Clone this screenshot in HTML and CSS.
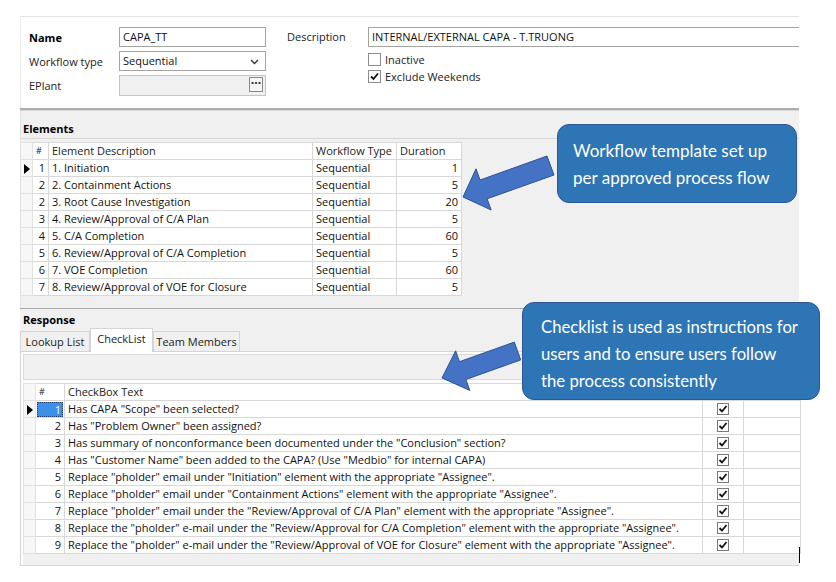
FILE: index.html
```html
<!DOCTYPE html>
<html>
<head>
<meta charset="utf-8">
<link rel="stylesheet" href="styles.css">
</head>
<body>
<div class="app">
  <section class="top">
    <div class="col1">
      <label class="lbl bold">Name</label>
      <div class="field">CAPA_TT</div>
      <label class="lbl">Workflow type</label>
      <div class="field select">Sequential
        <svg class="chev" width="9" height="6" viewBox="0 0 9 6"><path d="M1 1 L4.5 4.5 L8 1" fill="none" stroke="#333" stroke-width="1.4"/></svg>
      </div>
      <label class="lbl">EPlant</label>
      <div class="field disabled"><span class="dots">···</span></div>
    </div>
    <div class="col2">
      <label class="lbl">Description</label>
      <div class="desc-wrap">
        <div class="field desc">INTERNAL/EXTERNAL CAPA - T.TRUONG</div>
        <div class="chk-row"><span class="box"></span><span>Inactive</span></div>
        <div class="chk-row"><span class="box checked"><svg width="11" height="11" viewBox="0 0 11 11"><path d="M2 5.5 L4.5 8 L9 2.5" fill="none" stroke="#111" stroke-width="1.8"/></svg></span><span>Exclude Weekends</span></div>
      </div>
    </div>
  </section>
  <div class="splitter"></div>
  <section class="elements">
    <div class="sec-title">Elements</div>
    <table class="grid el-grid">
      <colgroup><col class="c-ind"><col class="c-num"><col class="c-desc"><col class="c-type"><col class="c-dur"></colgroup>
      <tr class="hdr"><td class="ind"></td><td class="hash">#</td><td>Element Description</td><td>Workflow Type</td><td>Duration</td></tr>
      <tr><td class="ind"><span class="tri"></span></td><td class="r">1</td><td>1. Initiation</td><td>Sequential</td><td class="r">1</td></tr>
      <tr><td class="ind"></td><td class="r">2</td><td>2. Containment Actions</td><td>Sequential</td><td class="r">5</td></tr>
      <tr><td class="ind"></td><td class="r">2</td><td>3. Root Cause Investigation</td><td>Sequential</td><td class="r">20</td></tr>
      <tr><td class="ind"></td><td class="r">3</td><td>4. Review/Approval of C/A Plan</td><td>Sequential</td><td class="r">5</td></tr>
      <tr><td class="ind"></td><td class="r">4</td><td>5. C/A Completion</td><td>Sequential</td><td class="r">60</td></tr>
      <tr><td class="ind"></td><td class="r">5</td><td>6. Review/Approval of C/A Completion</td><td>Sequential</td><td class="r">5</td></tr>
      <tr><td class="ind"></td><td class="r">6</td><td>7. VOE Completion</td><td>Sequential</td><td class="r">60</td></tr>
      <tr><td class="ind"></td><td class="r">7</td><td>8. Review/Approval of VOE for Closure</td><td>Sequential</td><td class="r">5</td></tr>
    </table>
  </section>
  <div class="splitter2"></div>
  <section class="response">
    <div class="sec-title2">Response</div>
    <div class="tabs">
      <div class="tab t1">Lookup List</div>
      <div class="tab t2 active">CheckList</div>
      <div class="tab t3">Team Members</div>
    </div>
    <div class="tabpanel">
      <div class="toolbar"></div>
      <table class="grid ck-grid">
        <colgroup><col class="k-ind"><col class="k-num"><col class="k-text"><col class="k-chk"><col class="k-rest"></colgroup>
        <tr class="hdr"><td class="ind"></td><td class="hash">#</td><td>CheckBox Text</td><td></td><td></td></tr>
        <tr><td class="ind"><span class="tri"></span></td><td class="r sel"><span>1</span></td><td>Has CAPA "Scope" been selected?</td><td class="cc"><span class="cb"></span></td><td></td></tr>
        <tr><td class="ind"></td><td class="r">2</td><td>Has "Problem Owner" been assigned?</td><td class="cc"><span class="cb"></span></td><td></td></tr>
        <tr><td class="ind"></td><td class="r">3</td><td>Has summary of nonconformance been documented under the "Conclusion" section?</td><td class="cc"><span class="cb"></span></td><td></td></tr>
        <tr><td class="ind"></td><td class="r">4</td><td>Has "Customer Name" been added to the CAPA? (Use "Medbio" for internal CAPA)</td><td class="cc"><span class="cb"></span></td><td></td></tr>
        <tr><td class="ind"></td><td class="r">5</td><td>Replace "pholder" email under "Initiation" element with the appropriate "Assignee".</td><td class="cc"><span class="cb"></span></td><td></td></tr>
        <tr><td class="ind"></td><td class="r">6</td><td>Replace "pholder" email under "Containment Actions" element with the appropriate "Assignee".</td><td class="cc"><span class="cb"></span></td><td></td></tr>
        <tr><td class="ind"></td><td class="r">7</td><td>Replace "pholder" email under the "Review/Approval of C/A Plan" element with the appropriate "Assignee".</td><td class="cc"><span class="cb"></span></td><td></td></tr>
        <tr><td class="ind"></td><td class="r">8</td><td>Replace the "pholder" e-mail under the "Review/Approval for C/A Completion" element with the appropriate "Assignee".</td><td class="cc"><span class="cb"></span></td><td></td></tr>
        <tr><td class="ind"></td><td class="r">9</td><td>Replace the "pholder" e-mail under the "Review/Approval of VOE for Closure" element with the appropriate "Assignee".</td><td class="cc"><span class="cb"></span></td><td></td></tr>
      </table>
      <div class="filler"></div>
    </div>
  </section>
</div>

<svg class="arrows" width="836" height="582" viewBox="0 0 836 582">
  <polygon points="463,197 491.2,210 487.1,198.8 554,175 547,156 480.1,180 476,168.8" fill="#4472c4" stroke="#2f528f" stroke-width="1"/>
  <polygon points="442,378 469.8,390.4 465.9,379.5 520.7,359.9 514.3,342.1 459.5,361.7 455.6,350.8" fill="#4472c4" stroke="#2f528f" stroke-width="1"/>
</svg>
<div class="callout c1"><div class="ctext">Workflow template set up<br>per approved process flow</div></div>
<div class="callout c2"><div class="ctext">Checklist is used as instructions for<br>users and to ensure users follow<br>the process consistently</div></div>
<div class="caret"></div>
</body>
</html>
```

FILE: styles.css
```css
html, body {
  margin: 0;
  padding: 0;
}
body {
  background: #ffffff;
  font-family: "Open Sans", "Noto Sans", sans-serif;
  font-size: 11px;
  color: #111;
  width: 836px;
  height: 582px;
  overflow: hidden;
  position: relative;
}
.app {
  margin: 16px 0 0 20px;
  width: 779px;
}
/* ---------- top form ---------- */
.top {
  height: 92px;
  box-sizing: border-box;
  border-top: 1px solid #e4e4e4;
  border-left: 1px solid #ececec;
  background: #fff;
  display: flex;
  padding: 10px 0 0 8px;
}
.col1 {
  display: grid;
  grid-template-columns: 90px 147px;
  grid-template-rows: 20px 20px 21px;
  row-gap: 4px;
  align-items: center;
}
.lbl {
  color: #222;
  line-height: 15px;
}
.bold { font-weight: bold; color: #000; }
.field {
  box-sizing: border-box;
  height: 100%;
  border: 1px solid #a4a4a4;
  background: #fff;
  padding: 0 3px;
  line-height: 18px;
  color: #111;
  position: relative;
}
.select .chev {
  position: absolute;
  right: 6px;
  top: 7px;
}
.disabled {
  background: #f0f0f0;
  border-color: #c4c4c4;
}
.dots {
  position: absolute;
  right: 2px;
  top: 1px;
  width: 14px;
  height: 15px;
  box-sizing: border-box;
  border: 1px solid #8a8a8a;
  background: #f4f4f4;
  font-size: 12px;
  font-weight: bold;
  line-height: 10px;
  text-align: center;
  color: #222;
}
.col2 {
  margin-left: 21px;
  display: grid;
  grid-template-columns: 81px 1fr;
  flex: 1;
  align-items: start;
}
.col2 > .lbl { padding-top: 2px; }
.desc-wrap { display: flex; flex-direction: column; }
.desc {
  height: 20px;
  border-right: none;
}
.chk-row {
  display: flex;
  align-items: center;
  gap: 4px;
  height: 13px;
  margin-top: 4px;
  line-height: 13px;
  color: #222;
}
.desc + .chk-row { margin-top: 6px; }
.box {
  width: 13px;
  height: 13px;
  box-sizing: border-box;
  border: 1px solid #8c8c8c;
  background: #fff;
  position: relative;
}
.box svg { position: absolute; left: 0; top: 0; }

/* ---------- splitters ---------- */
.splitter {
  height: 2px;
  background: #acacac;
  border-bottom: 1px solid #d8d8d8;
}
.splitter2 {
  height: 1px;
  background: #a8a8a8;
}
/* ---------- elements ---------- */
.elements {
  background: #f0f0f0;
  height: 197px;
  box-sizing: border-box;
  border-left: 1px solid #e0e0e0;
}
.sec-title {
  height: 28px;
  box-sizing: border-box;
  padding: 10px 0 0 2px;
  line-height: 15px;
  font-weight: bold;
  color: #000;
  border-bottom: 1px solid #d6d6d6;
}
.grid {
  border-collapse: collapse;
  table-layout: fixed;
  background: #fff;
}
.grid td {
  height: 16px;
  padding: 0 3px;
  border: 1px solid #d8d8d8;
  line-height: 16px;
  white-space: nowrap;
  overflow: hidden;
  color: #111;
}
.grid td.r { text-align: right; }
.grid td.ind {
  background: #f7f7f7;
  padding: 0;
  position: relative;
  border-color: #e2e2e2;
}
.tri {
  position: absolute;
  left: 3px;
  top: 4px;
  width: 0;
  height: 0;
  border-top: 5px solid transparent;
  border-bottom: 5px solid transparent;
  border-left: 6px solid #000;
}
.el-grid {
  margin-top: 3px;
  width: 441px;
  margin-left: -1px;
}
.c-ind { width: 12px; }
.c-num { width: 16px; }
.c-desc { width: 264px; }
.c-type { width: 84px; }
.c-dur { width: 65px; }
.hdr td { color: #222; }

/* ---------- response ---------- */
.response {
  background: #f0f0f0;
  height: 257px;
  box-sizing: border-box;
}
.sec-title2 {
  height: 19px;
  box-sizing: border-box;
  padding: 3px 0 0 3px;
  line-height: 15px;
  font-weight: bold;
  color: #000;
}
.tabs {
  display: flex;
  align-items: flex-end;
  height: 23px;
  position: relative;
  z-index: 2;
}
.tab {
  box-sizing: border-box;
  height: 20px;
  border: 1px solid #d4d4d4;
  border-bottom: none;
  background: #f0f0f0;
  line-height: 19px;
  text-align: center;
  color: #222;
}
.t1 { width: 70px; }
.t2 { width: 63px; }
.t3 { width: 87px; }
.tab.active {
  height: 24px;
  margin-bottom: -1px;
  background: #fff;
  line-height: 19px;
  padding-bottom: 4px;
}
.tabpanel {
  border: 1px solid #d4d4d4;
  border-right: none;
  background: #fff;
  height: 215px;
  box-sizing: border-box;
  padding: 2px 0 0 2px;
  display: flex;
  flex-direction: column;
}
.toolbar {
  height: 26px;
  background: #f0f0f0;
  border: 1px solid #dadada;
  border-right: none;
  box-sizing: border-box;
  margin-bottom: 3px;
}
.ck-grid {
  width: 777px;
}
.k-ind { width: 12px; }
.k-num { width: 29px; }
.k-text { width: 638px; }
.k-chk { width: 41px; }
.k-rest { width: 57px; }
.grid td.hash { font-size: 9px; }
.grid td.sel {
  padding: 0;
}
.sel span {
  display: block;
  margin: 0 1px;
  height: 15px;
  line-height: 15px;
  background: #3d8fe8;
  color: #fff;
  text-align: right;
  padding-right: 2px;
  outline: 1px dotted #1a3f7a;
  outline-offset: -1px;
}
.grid td.cc {
  padding: 0;
  text-align: center;
}
.cb {
  display: inline-block;
  width: 12px;
  height: 12px;
  box-sizing: border-box;
  border: 1px solid #7a7a7a;
  vertical-align: middle;
  margin-top: -2px;
  background:
    url("data:image/svg+xml;utf8,<svg xmlns='http://www.w3.org/2000/svg' width='10' height='10' viewBox='0 0 10 10'><path d='M1.5 5 L4 7.5 L8.5 2' fill='none' stroke='%23111' stroke-width='1.8'/></svg>") center/10px 10px no-repeat, #fff;
}
.filler {
  flex: 1;
  background: #f0f0f0;
}

/* ---------- annotations ---------- */
.arrows {
  position: absolute;
  left: 0;
  top: 0;
  pointer-events: none;
}
.callout {
  position: absolute;
  box-sizing: border-box;
  background: #2e75b6;
  border: 1.5px solid #2f5597;
  border-radius: 12px;
  color: #fff;
  font-family: "Lato", "Open Sans", sans-serif;
  font-size: 17px;
  line-height: 27px;
}
.c1 {
  left: 557px;
  top: 124px;
  width: 240px;
  height: 79px;
  padding: 12px 0 0 15px;
}
.c2 {
  left: 522px;
  top: 302px;
  width: 298px;
  height: 98px;
  padding: 11px 0 0 18px;
  font-size: 16.7px;
}
.caret {
  position: absolute;
  left: 799px;
  top: 547px;
  width: 1px;
  height: 16px;
  background: #000;
}
```
